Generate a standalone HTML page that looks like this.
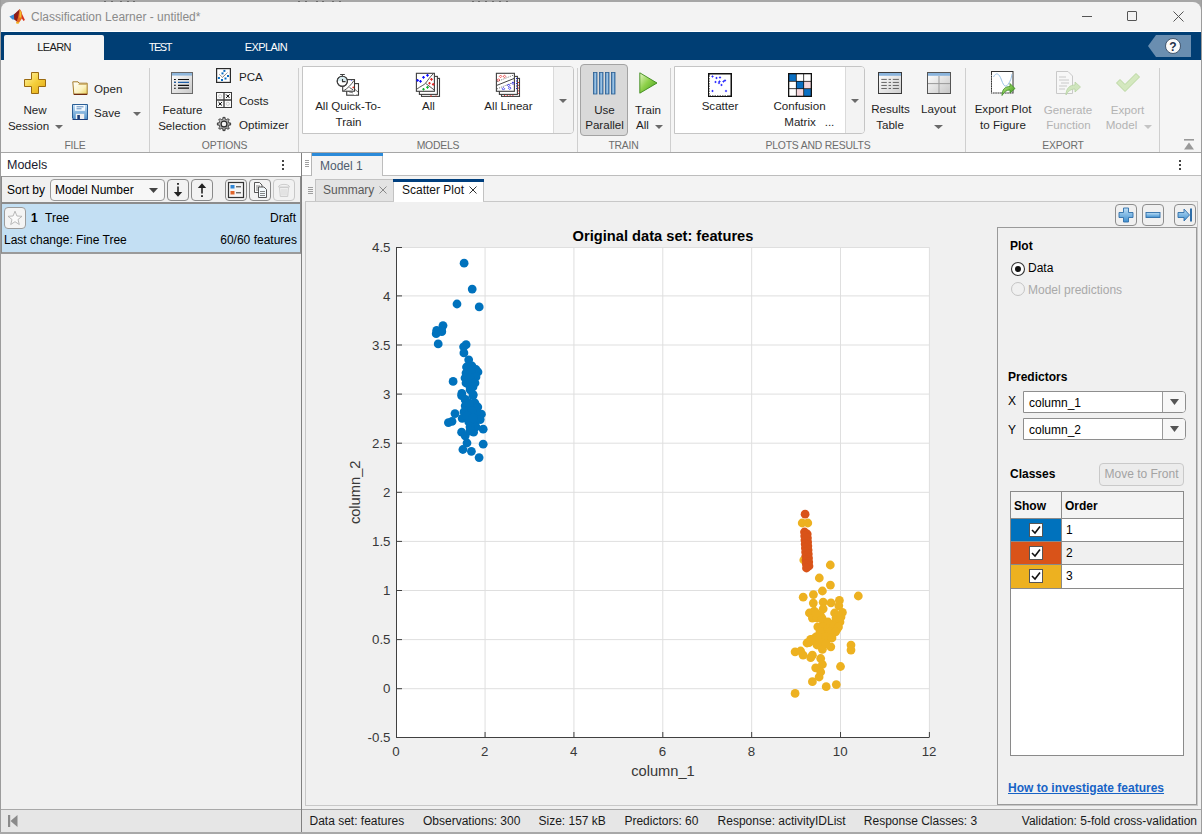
<!DOCTYPE html>
<html><head><meta charset="utf-8"><style>
html,body{margin:0;padding:0;width:1202px;height:834px;overflow:hidden;background:#f0f0f0;}
body{position:relative;font-family:"Liberation Sans",sans-serif;}
.t{position:absolute;white-space:nowrap;line-height:1;}
.r{position:absolute;box-sizing:border-box;}
svg.r{overflow:visible;}
</style></head><body>
<div class="r" style="left:0px;top:0px;width:1202px;height:834px;background:#f0f0f0;"></div>
<div class="r" style="left:0px;top:0px;width:1202px;height:12px;background:#a6a6a6;"></div>
<div class="r" style="left:1px;top:2px;width:1200px;height:30px;background:#f3f3f3;border-radius:8px 8px 0 0;"></div>
<div class="r" style="left:104px;top:1px;width:2px;height:1px;background:#6a6a6a;"></div>
<div class="r" style="left:111px;top:1px;width:2px;height:1px;background:#6a6a6a;"></div>
<div class="r" style="left:120px;top:1px;width:2px;height:1px;background:#6a6a6a;"></div>
<div class="r" style="left:127px;top:1px;width:2px;height:1px;background:#6a6a6a;"></div>
<div class="r" style="left:133px;top:1px;width:2px;height:1px;background:#6a6a6a;"></div>
<div class="r" style="left:298px;top:1px;width:2px;height:1px;background:#6a6a6a;"></div>
<div class="r" style="left:305px;top:1px;width:2px;height:1px;background:#6a6a6a;"></div>
<div class="r" style="left:316px;top:1px;width:2px;height:1px;background:#6a6a6a;"></div>
<div class="r" style="left:322px;top:1px;width:2px;height:1px;background:#6a6a6a;"></div>
<div class="r" style="left:332px;top:1px;width:2px;height:1px;background:#6a6a6a;"></div>
<div class="r" style="left:339px;top:1px;width:2px;height:1px;background:#6a6a6a;"></div>
<div class="r" style="left:472px;top:1px;width:2px;height:1px;background:#6a6a6a;"></div>
<div class="r" style="left:478px;top:1px;width:2px;height:1px;background:#6a6a6a;"></div>
<div class="r" style="left:485px;top:1px;width:2px;height:1px;background:#6a6a6a;"></div>
<div class="r" style="left:492px;top:1px;width:2px;height:1px;background:#6a6a6a;"></div>
<div class="r" style="left:499px;top:1px;width:2px;height:1px;background:#6a6a6a;"></div>
<div class="r" style="left:506px;top:1px;width:2px;height:1px;background:#6a6a6a;"></div>
<div class="r" style="left:1px;top:31px;width:1200px;height:1px;background:#ffffff;"></div>
<div class="r" style="left:0px;top:32px;width:1202px;height:28px;background:#003e74;"></div>
<div class="r" style="left:0px;top:60px;width:1202px;height:92px;background:#f5f5f5;"></div>
<div class="r" style="left:0px;top:152px;width:1202px;height:1px;background:#a6a6a6;"></div>
<div class="r" style="left:0px;top:0px;width:1px;height:834px;background:#9c9c9c;"></div>
<div class="t" style="left:31px;top:10.84px;font-size:12px;color:#8a8a8a;font-weight:normal;">Classification Learner - untitled*</div>
<svg class="r" style="left:6px;top:6px;" width="24" height="20" viewBox="0 0 24 20"><path d="M3.4 10.6 L8 8.2 L10.5 6.5 L12.5 11 L8.5 13.6 L6.5 13.4 Z" fill="#3a8cd6"/><path d="M8 8.6 L13.7 2.9 L14.2 10 L11.5 16 L8.2 13.6 Z" fill="#8e1d18"/><path d="M13.7 2.9 L18.9 14.1 L17.5 15 L15.6 12 Z" fill="#d9331d"/><path d="M13.7 2.9 L15.8 6 L16 12.5 L13 16.8 L10.3 16.8 L12 11.5 Z" fill="#e56a22"/><path d="M13.9 4 L15.3 6.5 L15.2 11.5 L13.4 11.5 Z" fill="#f2be2c"/><path d="M10.3 16.8 L13 16.8 L11 17.2 Z" fill="#f3b520" stroke="#f3b520" stroke-width="1"/></svg>
<div class="r" style="left:1082px;top:16px;width:10px;height:1px;background:#555;"></div>
<div class="r" style="left:1127px;top:11px;width:10px;height:10px;border:1px solid #555;border-radius:1px;"></div>
<svg class="r" style="left:1173px;top:11px;" width="11" height="11" viewBox="0 0 11 11"><path d="M0.5 0.5 L10.5 10.5 M10.5 0.5 L0.5 10.5" stroke="#555" stroke-width="1"/></svg>
<div class="r" style="left:4px;top:35px;width:100px;height:25px;background:#f5f5f5;border-radius:2px 2px 0 0;"></div>
<div class="t" style="left:4.00px;width:100px;text-align:center;top:42.19px;font-size:11px;color:#1a1a1a;font-weight:normal;letter-spacing:-0.6px;">LEARN</div>
<div class="t" style="left:109.80px;width:100px;text-align:center;top:42.19px;font-size:11px;color:#ffffff;font-weight:normal;letter-spacing:-1.5px;">TEST</div>
<div class="t" style="left:216.00px;width:100px;text-align:center;top:42.19px;font-size:11px;color:#ffffff;font-weight:normal;letter-spacing:-0.6px;">EXPLAIN</div>
<svg class="r" style="left:1148px;top:35px;" width="43" height="22" viewBox="0 0 43 22"><path d="M0 11 L8 0 L43 0 L43 22 L8 22 Z" fill="#6a8eb0"/><circle cx="25" cy="11" r="7.5" fill="#fafafa" stroke="#2b3d55" stroke-width="0.8"/><text x="25" y="15.5" text-anchor="middle" font-family="Liberation Sans" font-weight="bold" font-size="12" fill="#1d2f4a">?</text></svg>
<div class="r" style="left:149px;top:68px;width:1px;height:84px;background:#cfcfcf;"></div>
<div class="r" style="left:298px;top:68px;width:1px;height:84px;background:#cfcfcf;"></div>
<div class="r" style="left:577px;top:68px;width:1px;height:84px;background:#cfcfcf;"></div>
<div class="r" style="left:670px;top:68px;width:1px;height:84px;background:#cfcfcf;"></div>
<div class="r" style="left:965px;top:68px;width:1px;height:84px;background:#cfcfcf;"></div>
<div class="r" style="left:1159px;top:68px;width:1px;height:84px;background:#cfcfcf;"></div>
<div class="t" style="left:-25.00px;width:200px;text-align:center;top:140.80px;font-size:10.4px;color:#6d6d6d;font-weight:normal;letter-spacing:-0.2px;">FILE</div>
<div class="t" style="left:124.50px;width:200px;text-align:center;top:140.80px;font-size:10.4px;color:#6d6d6d;font-weight:normal;letter-spacing:-0.2px;">OPTIONS</div>
<div class="t" style="left:338.00px;width:200px;text-align:center;top:140.80px;font-size:10.4px;color:#6d6d6d;font-weight:normal;letter-spacing:-0.2px;">MODELS</div>
<div class="t" style="left:523.50px;width:200px;text-align:center;top:140.80px;font-size:10.4px;color:#6d6d6d;font-weight:normal;letter-spacing:-0.2px;">TRAIN</div>
<div class="t" style="left:718.00px;width:200px;text-align:center;top:140.80px;font-size:10.4px;color:#6d6d6d;font-weight:normal;letter-spacing:-0.2px;">PLOTS AND RESULTS</div>
<div class="t" style="left:963.00px;width:200px;text-align:center;top:140.80px;font-size:10.4px;color:#6d6d6d;font-weight:normal;letter-spacing:-0.2px;">EXPORT</div>
<div class="t" style="left:5.00px;width:60px;text-align:center;top:103.78px;font-size:11.6px;color:#1e1e1e;font-weight:normal;">New</div>
<div class="t" style="left:-1.50px;width:60px;text-align:center;top:119.68px;font-size:11.6px;color:#1e1e1e;font-weight:normal;">Session</div>
<svg class="r" style="left:55px;top:125px;" width="8" height="4" viewBox="0 0 8 4"><path d="M0 0 L8 0 L4.0 4 Z" fill="#6a6a6a"/></svg>
<svg class="r" style="left:24px;top:72px;" width="22" height="22" viewBox="0 0 22 22"><defs><linearGradient id="gp" x1="0" y1="0" x2="1" y2="1"><stop offset="0" stop-color="#fff7b0"/><stop offset="0.5" stop-color="#f5cf3a"/><stop offset="1" stop-color="#e0a514"/></linearGradient></defs><path d="M7.5 0.5 H14.5 V7.5 H21.5 V14.5 H14.5 V21.5 H7.5 V14.5 H0.5 V7.5 H7.5 Z" fill="url(#gp)" stroke="#9a6a10" stroke-width="1"/></svg>
<div class="t" style="left:94px;top:83.18px;font-size:11.6px;color:#1e1e1e;font-weight:normal;">Open</div>
<svg class="r" style="left:72px;top:81px;" width="17" height="15" viewBox="0 0 17 15"><defs><linearGradient id="gf" x1="0" y1="0" x2="1" y2="1"><stop offset="0" stop-color="#ffffff"/><stop offset="0.6" stop-color="#fbf2c0"/><stop offset="1" stop-color="#e9cf5a"/></linearGradient></defs><path d="M0.8 0.8 H6 L7 2.2 H15.2 V13.2 H1.8 Z" fill="url(#gf)" stroke="#a57c2a" stroke-width="1"/><path d="M6.5 3.5 H15" stroke="#c9a85a" stroke-width="0.8"/><path d="M1.8 13.4 H15.2" stroke="#6e2a10" stroke-width="1.2"/></svg>
<div class="t" style="left:94px;top:107.18px;font-size:11.6px;color:#1e1e1e;font-weight:normal;">Save</div>
<svg class="r" style="left:133px;top:112px;" width="8" height="4" viewBox="0 0 8 4"><path d="M0 0 L8 0 L4.0 4 Z" fill="#6a6a6a"/></svg>
<svg class="r" style="left:72px;top:104px;" width="16" height="16" viewBox="0 0 16 16"><defs><linearGradient id="gs" x1="0" y1="0" x2="0" y2="1"><stop offset="0" stop-color="#c4e0f6"/><stop offset="1" stop-color="#4f8fc8"/></linearGradient></defs><path d="M0.5 0.5 H15.5 V15.5 H2 L0.5 14 Z" fill="url(#gs)" stroke="#2b5e96"/><rect x="3" y="1" width="10" height="5.8" fill="#f5faff"/><path d="M4.5 2.8 H11.5 M4.5 4.8 H9.5" stroke="#4d7fb5" stroke-width="0.9"/><rect x="3.8" y="9.8" width="8.4" height="5.7" fill="#f0f0f0"/><rect x="5.3" y="11" width="2.6" height="4.5" fill="#1d3d78"/><path d="M0.5 15.5 H15.5" stroke="#1d3d78" stroke-width="1"/></svg>
<div class="t" style="left:152.50px;width:60px;text-align:center;top:104.18px;font-size:11.6px;color:#1e1e1e;font-weight:normal;">Feature</div>
<div class="t" style="left:152.00px;width:60px;text-align:center;top:119.68px;font-size:11.6px;color:#1e1e1e;font-weight:normal;">Selection</div>
<svg class="r" style="left:171px;top:72px;" width="22" height="22" viewBox="0 0 22 22"><defs><linearGradient id="gw" x1="0" y1="0" x2="1" y2="1"><stop offset="0" stop-color="#ffffff"/><stop offset="1" stop-color="#c8c8c8"/></linearGradient></defs><rect x="0.5" y="0.5" width="21" height="21" fill="url(#gw)" stroke="#6a6a6a"/><rect x="1" y="1" width="20" height="2.6" fill="#8fb7dc"/><path d="M3 7.5 H4.8 M3 10.4 H4.8 M3 13.3 H4.8 M3 16.2 H4.8" stroke="#111" stroke-width="1.1"/><path d="M7 7.5 H18 M7 13.3 H18 M7 16.2 H18" stroke="#111" stroke-width="1.2"/><path d="M7 10.4 H18 M3 10.4 H4.8" stroke="#1f5fa8" stroke-width="1.2"/></svg>
<div class="t" style="left:239px;top:71.18px;font-size:11.6px;color:#1e1e1e;font-weight:normal;">PCA</div>
<svg class="r" style="left:216px;top:68px;" width="15" height="15" viewBox="0 0 15 15"><rect x="0.6" y="0.6" width="13.8" height="13.8" fill="#fff" stroke="#2a2a2a" stroke-width="1.2"/><path d="M3.5 6.6 L6.5 9.3 L11.5 4.6" stroke="#333" stroke-width="0.9" stroke-dasharray="1 0.6" fill="none"/><rect x="7.4" y="1.9" width="2" height="2" fill="#0a6cc0"/><rect x="5.5" y="4.4" width="2" height="2" fill="#0a6cc0"/><rect x="11" y="7" width="2" height="2" fill="#0a6cc0"/><rect x="1.9" y="9" width="2" height="2" fill="#0a6cc0"/><rect x="5" y="11" width="2" height="2" fill="#0a6cc0"/><rect x="8.5" y="9.5" width="2" height="2" fill="#0a6cc0"/></svg>
<div class="t" style="left:239px;top:94.78px;font-size:11.6px;color:#1e1e1e;font-weight:normal;">Costs</div>
<svg class="r" style="left:216px;top:92px;" width="16" height="16" viewBox="0 0 16 16"><rect x="0.5" y="0.5" width="15" height="15" fill="#fafafa" stroke="#3a3a3a" stroke-width="1"/><path d="M8 0.5 V15.5 M0.5 8 H15.5" stroke="#3a3a3a" stroke-width="1.3"/><circle cx="4.2" cy="4.2" r="1.6" fill="none" stroke="#b5b5b5" stroke-width="0.6"/><circle cx="11.8" cy="11.8" r="1.6" fill="none" stroke="#b5b5b5" stroke-width="0.6"/><path d="M10 2.4 L13.6 6 M13.6 2.4 L10 6 M2.4 10 L6 13.6 M6 10 L2.4 13.6" stroke="#000" stroke-width="0.9"/><rect x="11" y="3.4" width="1.6" height="1.6" fill="#000"/><rect x="3.4" y="11" width="1.6" height="1.6" fill="#000"/></svg>
<div class="t" style="left:239px;top:118.78px;font-size:11.6px;color:#1e1e1e;font-weight:normal;">Optimizer</div>
<svg class="r" style="left:217px;top:117px;" width="14" height="14" viewBox="0 0 14 14"><defs><linearGradient id="gg" x1="0" y1="0" x2="1" y2="1"><stop offset="0" stop-color="#d0d0d0"/><stop offset="1" stop-color="#8a8a8a"/></linearGradient></defs><path d="M5.09 2.38 L5.99 2.10 L5.95 0.38 L8.05 0.38 L8.01 2.10 L8.91 2.38 L9.75 2.82 L10.94 1.58 L12.42 3.06 L11.18 4.25 L11.62 5.09 L11.90 5.99 L13.62 5.95 L13.62 8.05 L11.90 8.01 L11.62 8.91 L11.18 9.75 L12.42 10.94 L10.94 12.42 L9.75 11.18 L8.91 11.62 L8.01 11.90 L8.05 13.62 L5.95 13.62 L5.99 11.90 L5.09 11.62 L4.25 11.18 L3.06 12.42 L1.58 10.94 L2.82 9.75 L2.38 8.91 L2.10 8.01 L0.38 8.05 L0.38 5.95 L2.10 5.99 L2.38 5.09 L2.82 4.25 L1.58 3.06 L3.06 1.58 L4.25 2.82 Z" fill="url(#gg)" stroke="#3a3a3a" stroke-width="1" stroke-linejoin="round"/><circle cx="7" cy="7" r="2.9" fill="#f4f4f4" stroke="#2a2a2a" stroke-width="1.2"/></svg>
<div class="r" style="left:302px;top:66px;width:272px;height:68px;background:#fff;border:1px solid #c5c5c5;border-radius:0 4px 4px 0;"></div>
<div class="r" style="left:553px;top:67px;width:20px;height:66px;background:#f3f3f3;border-left:1px solid #dadada;border-radius:0 3px 3px 0;"></div>
<svg class="r" style="left:559px;top:99px;" width="8" height="4" viewBox="0 0 8 4"><path d="M0 0 L8 0 L4.0 4 Z" fill="#6a6a6a"/></svg>
<div class="t" style="left:303.00px;width:90px;text-align:center;top:100.18px;font-size:11.6px;color:#1e1e1e;font-weight:normal;">All Quick-To-</div>
<div class="t" style="left:318.50px;width:60px;text-align:center;top:115.68px;font-size:11.6px;color:#1e1e1e;font-weight:normal;">Train</div>
<div class="t" style="left:398.50px;width:60px;text-align:center;top:100.18px;font-size:11.6px;color:#1e1e1e;font-weight:normal;">All</div>
<div class="t" style="left:468.50px;width:80px;text-align:center;top:100.18px;font-size:11.6px;color:#1e1e1e;font-weight:normal;">All Linear</div>
<svg class="r" style="left:412px;top:70px;" width="30" height="30" viewBox="0 0 30 30"><rect x="9.5" y="8.4" width="18" height="18" fill="#fff" stroke="#3f3f3f" stroke-width="1.1"/><path d="M18 26 L20 26 M23.5 26 H24.5 M25.5 20.5 V21.5" stroke="#e03020" stroke-width="1.1"/><rect x="7.4" y="6.4" width="18" height="18" fill="#fff" stroke="#3f3f3f" stroke-width="1.1"/><rect x="4.4" y="3.3" width="18" height="18" fill="#fff" stroke="#3f3f3f" stroke-width="1.1"/><path d="M5 19 C9 16, 12 15, 13.5 13.3 C16 10, 18 7, 21 4 M13.5 13.3 L22 19.8" stroke="#444" stroke-width="0.9" fill="none"/><path d="M14.2 5.4 H16.8 M15.5 4.1000000000000005 V6.7" stroke="#1010ff" stroke-width="1.1"/><path d="M10.2 7.4 H12.8 M11.5 6.1000000000000005 V8.700000000000001" stroke="#1010ff" stroke-width="1.1"/><path d="M4.3 10.4 H6.8999999999999995 M5.6 9.1 V11.700000000000001" stroke="#1010ff" stroke-width="1.1"/><path d="M7.2 11.4 H9.8 M8.5 10.1 V12.700000000000001" stroke="#1010ff" stroke-width="1.1"/><path d="M18.2 9.4 H20.8 M19.5 8.1 V10.700000000000001" stroke="#e02a2a" stroke-width="1.1"/><path d="M16.2 13.3 H18.8 M17.5 12.0 V14.600000000000001" stroke="#e02a2a" stroke-width="1.1"/><path d="M19.9 14.4 H22.5 M21.2 13.1 V15.700000000000001" stroke="#e02a2a" stroke-width="1.1"/><path d="M10.2 19.2 H12.8 M11.5 17.9 V20.5" stroke="#10b030" stroke-width="1.1"/><path d="M14.2 17.4 H16.8 M15.5 16.099999999999998 V18.7" stroke="#10b030" stroke-width="1.1"/></svg>
<svg class="r" style="left:492px;top:70px;" width="30" height="30" viewBox="0 0 30 30"><rect x="9.5" y="8.4" width="18" height="18" fill="#fff" stroke="#3f3f3f" stroke-width="1.1"/><rect x="7.4" y="6.4" width="18" height="18" fill="#fff" stroke="#3f3f3f" stroke-width="1.1"/><path d="M24.5 8 V20" stroke="#2020e0" stroke-width="1" stroke-dasharray="1 1.5"/><path d="M26.5 12 V24 M12 25.5 H22" stroke="#e03030" stroke-width="1" stroke-dasharray="1 1.8"/><rect x="4.4" y="3.3" width="18" height="18" fill="#fff" stroke="#3f3f3f" stroke-width="1.1"/><path d="M5 15.3 L22 8.5" stroke="#444" stroke-width="1"/><path d="M5 11.6 L22 4.9 M5 18.9 L22 12.1" stroke="#444" stroke-width="0.8" stroke-dasharray="1 1.3"/><path d="M7.3 6.4 L8.6 5.1000000000000005 L9.9 6.4 L8.6 7.7 Z" fill="none" stroke="#e83030" stroke-width="0.8"/><path d="M11.2 6.4 L12.5 5.1000000000000005 L13.8 6.4 L12.5 7.7 Z" fill="none" stroke="#e83030" stroke-width="0.8"/><path d="M5.2 10 L6.5 8.7 L7.8 10 L6.5 11.3 Z" fill="none" stroke="#e83030" stroke-width="0.8"/><path d="M15.3 15.3 L16.6 14.0 L17.900000000000002 15.3 L16.6 16.6 Z" fill="none" stroke="#2020e8" stroke-width="0.8"/><path d="M19.7 13.2 L21 11.899999999999999 L22.3 13.2 L21 14.5 Z" fill="none" stroke="#2020e8" stroke-width="0.8"/><path d="M10.1 18.8 L11.4 17.5 L12.700000000000001 18.8 L11.4 20.1 Z" fill="none" stroke="#2020e8" stroke-width="0.8"/><path d="M16.4 18.2 L17.7 16.9 L19.0 18.2 L17.7 19.5 Z" fill="none" stroke="#2020e8" stroke-width="0.8"/></svg>
<svg class="r" style="left:334px;top:70px;" width="30" height="30" viewBox="0 0 30 30"><rect x="12.7" y="13.6" width="11.8" height="11.6" fill="#fff" stroke="#3a3a3a" stroke-width="1.1"/><path d="M13.5 20 C15 23, 18 22, 19 23 M21 19.5 L24 22" stroke="#444" stroke-width="0.8" fill="none"/><rect x="20" y="23.3" width="2" height="1.6" fill="#fff"/><rect x="8.7" y="9.6" width="11.8" height="11.6" fill="#fff" stroke="#3a3a3a" stroke-width="1.1"/><path d="M9.5 20.8 C13 19, 17 15, 20 10.5 M15.5 17.5 L19 19.8" stroke="#444" stroke-width="0.9" fill="none"/><circle cx="19.3" cy="17.4" r="0.9" fill="#e03020"/><circle cx="17.5" cy="10.5" r="0.6" fill="#6a6aff"/><circle cx="8.3" cy="11.3" r="5.1" fill="#ffffff" stroke="#3f3f3f" stroke-width="1.1"/><path d="M3.8 11 A4.5 4.5 0 0 1 12.8 11 Z" fill="#d6ebf0"/><circle cx="8.3" cy="11.3" r="5.1" fill="none" stroke="#3f3f3f" stroke-width="1.1"/><path d="M8.5 9 V11.6 H11.6" stroke="#3a3a3a" stroke-width="1.1" fill="none"/><path d="M6.1 4.5 H10.8 M8.4 4.5 V6.2" stroke="#3f3f3f" stroke-width="1"/></svg>
<div class="r" style="left:580px;top:64px;width:48px;height:72px;background:#d9d9d9;border:1px solid #a3a3a3;border-radius:4px;"></div>
<div class="t" style="left:574.50px;width:60px;text-align:center;top:103.68px;font-size:11.6px;color:#1e1e1e;font-weight:normal;">Use</div>
<div class="t" style="left:574.50px;width:60px;text-align:center;top:119.18px;font-size:11.6px;color:#1e1e1e;font-weight:normal;">Parallel</div>
<svg class="r" style="left:593px;top:72px;" width="23" height="23" viewBox="0 0 23 23"><defs><linearGradient id="gb" x1="0" y1="0" x2="1" y2="0"><stop offset="0" stop-color="#3d7ab8"/><stop offset="0.5" stop-color="#a9cde9"/><stop offset="1" stop-color="#3d7ab8"/></linearGradient></defs><rect x="0.5" y="0.5" width="3.5" height="21.5" fill="url(#gb)" stroke="#2c5f92" stroke-width="0.8"/><rect x="6.5" y="0.5" width="3.5" height="21.5" fill="url(#gb)" stroke="#2c5f92" stroke-width="0.8"/><rect x="12.5" y="0.5" width="3.5" height="21.5" fill="url(#gb)" stroke="#2c5f92" stroke-width="0.8"/><rect x="18.5" y="0.5" width="3.5" height="21.5" fill="url(#gb)" stroke="#2c5f92" stroke-width="0.8"/></svg>
<div class="t" style="left:618.00px;width:60px;text-align:center;top:103.68px;font-size:11.6px;color:#1e1e1e;font-weight:normal;">Train</div>
<div class="t" style="left:622.50px;width:40px;text-align:center;top:119.18px;font-size:11.6px;color:#1e1e1e;font-weight:normal;">All</div>
<svg class="r" style="left:655px;top:125px;" width="8" height="4" viewBox="0 0 8 4"><path d="M0 0 L8 0 L4.0 4 Z" fill="#6a6a6a"/></svg>
<svg class="r" style="left:639px;top:72px;" width="19" height="22" viewBox="0 0 19 22"><defs><linearGradient id="gt" x1="0" y1="0" x2="1" y2="1"><stop offset="0" stop-color="#e6f7c8"/><stop offset="0.45" stop-color="#8fd14a"/><stop offset="1" stop-color="#3f9a1a"/></linearGradient></defs><path d="M0.8 0.8 L18 11 L0.8 21.2 Z" fill="url(#gt)" stroke="#3d8a1c" stroke-width="0.9" stroke-linejoin="round"/></svg>
<div class="r" style="left:674px;top:66px;width:191px;height:68px;background:#fff;border:1px solid #c5c5c5;border-radius:0 4px 4px 0;"></div>
<div class="r" style="left:845px;top:67px;width:19px;height:66px;background:#f3f3f3;border-left:1px solid #dadada;border-radius:0 3px 3px 0;"></div>
<svg class="r" style="left:851px;top:99px;" width="8" height="4" viewBox="0 0 8 4"><path d="M0 0 L8 0 L4.0 4 Z" fill="#6a6a6a"/></svg>
<div class="t" style="left:690.00px;width:60px;text-align:center;top:100.18px;font-size:11.6px;color:#1e1e1e;font-weight:normal;">Scatter</div>
<svg class="r" style="left:708px;top:73px;" width="24" height="24" viewBox="0 0 24 24"><rect x="0.75" y="0.75" width="22.5" height="22.5" fill="#fff" stroke="#111" stroke-width="1.5"/><path d="M1.5 4 V22.5 H20" stroke="#fff" stroke-width="1" stroke-dasharray="1 1.5" fill="none"/><g stroke="#2a2aff" stroke-width="0.9"><path d="M3.4 3.5 h2.2 M4.5 2.4 v2.2"/><path d="M7.4 5 h2.2 M8.5 3.9 v2.2"/><path d="M10.9 4.5 h2.2 M12 3.4 v2.2"/><path d="M6.4 9 h2.2 M7.5 7.9 v2.2"/><path d="M10.4 8.5 h2.2 M11.5 7.4 v2.2"/><path d="M9.9 10 h2.2 M11 8.9 v2.2"/><path d="M14.4 8.5 h2.2 M15.5 7.4 v2.2"/><path d="M15.9 7.5 h2.2 M17 6.4 v2.2"/><path d="M12.4 12 h2.2 M13.5 10.9 v2.2"/><path d="M3.4 18 h2.2 M4.5 16.9 v2.2"/><path d="M16.9 18 h2.2 M18 16.9 v2.2"/></g></svg>
<div class="t" style="left:759.50px;width:80px;text-align:center;top:100.18px;font-size:11.6px;color:#1e1e1e;font-weight:normal;">Confusion</div>
<div class="t" style="left:770.00px;width:60px;text-align:center;top:115.88px;font-size:11.6px;color:#1e1e1e;font-weight:normal;">Matrix</div>
<div class="t" style="left:819.50px;width:20px;text-align:center;top:115.88px;font-size:11.6px;color:#1e1e1e;font-weight:normal;">...</div>
<svg class="r" style="left:788px;top:73px;" width="24" height="24" viewBox="0 0 24 24"><rect x="0" y="0" width="24" height="24" fill="#111"/><rect x="1.3" y="1.3" width="6.6" height="6.6" fill="#0a6fc2"/><rect x="8.7" y="1.3" width="6.6" height="6.6" fill="#fff"/><rect x="16.1" y="1.3" width="6.6" height="6.6" fill="#fff"/><rect x="1.3" y="8.7" width="6.6" height="6.6" fill="#fff"/><rect x="8.7" y="8.7" width="6.6" height="6.6" fill="#0a6fc2"/><rect x="16.1" y="8.7" width="6.6" height="6.6" fill="#f4d6dc"/><rect x="1.3" y="16.1" width="6.6" height="6.6" fill="#fff"/><rect x="8.7" y="16.1" width="6.6" height="6.6" fill="#f4d6dc"/><rect x="16.1" y="16.1" width="6.6" height="6.6" fill="#0a6fc2"/></svg>
<div class="t" style="left:860.50px;width:60px;text-align:center;top:103.38px;font-size:11.6px;color:#1e1e1e;font-weight:normal;">Results</div>
<div class="t" style="left:860.00px;width:60px;text-align:center;top:119.18px;font-size:11.6px;color:#1e1e1e;font-weight:normal;">Table</div>
<svg class="r" style="left:878px;top:72px;" width="24" height="22" viewBox="0 0 24 22"><defs><linearGradient id="gw2" x1="0" y1="0" x2="1" y2="1"><stop offset="0" stop-color="#ffffff"/><stop offset="1" stop-color="#cfcfcf"/></linearGradient></defs><rect x="0.5" y="0.5" width="23" height="21" fill="url(#gw2)" stroke="#3a3a3a"/><rect x="1" y="1" width="22" height="2.8" fill="#8ab4dc"/><path d="M3.3 7.40 H8.8 M10.6 7.40 H13 M14.8 7.40 H20.9" stroke="#666" stroke-width="1"/><path d="M3.3 10.43 H8.8 M10.6 10.43 H13 M14.8 10.43 H20.9" stroke="#666" stroke-width="1"/><path d="M3.3 13.46 H8.8 M10.6 13.46 H13 M14.8 13.46 H20.9" stroke="#666" stroke-width="1"/><path d="M3.3 16.49 H8.8 M10.6 16.49 H13 M14.8 16.49 H20.9" stroke="#666" stroke-width="1"/></svg>
<div class="t" style="left:908.50px;width:60px;text-align:center;top:103.38px;font-size:11.6px;color:#1e1e1e;font-weight:normal;">Layout</div>
<svg class="r" style="left:934px;top:125px;" width="9" height="4" viewBox="0 0 9 4"><path d="M0 0 L9 0 L4.5 4 Z" fill="#6a6a6a"/></svg>
<svg class="r" style="left:927px;top:72px;" width="24" height="22" viewBox="0 0 24 22"><defs><linearGradient id="gw3" x1="0" y1="0" x2="1" y2="1"><stop offset="0" stop-color="#ffffff"/><stop offset="1" stop-color="#c6c6c6"/></linearGradient></defs><rect x="0.5" y="0.5" width="23" height="21" fill="url(#gw3)" stroke="#555"/><rect x="1" y="1" width="22" height="2.8" fill="#8ab4dc"/><path d="M12 4 V21 M1 11.6 H23" stroke="#999" stroke-width="1"/></svg>
<div class="t" style="left:963.00px;width:80px;text-align:center;top:103.38px;font-size:11.6px;color:#1e1e1e;font-weight:normal;">Export Plot</div>
<div class="t" style="left:963.00px;width:80px;text-align:center;top:119.18px;font-size:11.6px;color:#1e1e1e;font-weight:normal;">to Figure</div>
<svg class="r" style="left:991px;top:71px;" width="25" height="25" viewBox="0 0 25 25"><defs><linearGradient id="ga" x1="0" y1="0" x2="1" y2="1"><stop offset="0" stop-color="#d8f0b0"/><stop offset="0.5" stop-color="#7cc24a"/><stop offset="1" stop-color="#2f8a1a"/></linearGradient></defs><rect x="0.5" y="0.5" width="21.5" height="21.5" fill="#fff" stroke="#333"/><path d="M1 22 H22" stroke="#fff" stroke-dasharray="1 1.4"/><path d="M1 4 V22" stroke="#fff" stroke-dasharray="1 1.4"/><path d="M2.5 6 C5 1, 8 2, 10.5 9 S 15 17, 18 12 S 20.5 4, 21 3" stroke="#9cc3e6" stroke-width="1" fill="none"/><path d="M11 24.5 C11 18.5, 14 15.5, 19 15.5 L19 12.5 L24 17.5 L19 22 L19 19 C15.5 19, 13 21, 11 24.5 Z" fill="url(#ga)" stroke="#3a8a22" stroke-width="0.8"/></svg>
<div class="t" style="left:1028.00px;width:80px;text-align:center;top:103.88px;font-size:11.6px;color:#b3b3b3;font-weight:normal;">Generate</div>
<div class="t" style="left:1028.50px;width:80px;text-align:center;top:119.18px;font-size:11.6px;color:#b3b3b3;font-weight:normal;">Function</div>
<svg class="r" style="left:1056px;top:71px;" width="25" height="25" viewBox="0 0 25 25"><path d="M0.5 0.5 H12 L16.5 5 V22.5 H0.5 Z" fill="#f7f7f7" stroke="#c9c9c9"/><path d="M3 6 H10 M3 9 H13 M5 12 H13 M3 15 H11 M3 18 H9" stroke="#c9c9c9"/><path d="M10 24 C10 17, 14 14, 19 14 L19 11 L24.5 16 L19 21 L19 18 C15 18, 12 20, 10 24 Z" fill="#cfe5bd" stroke="#b7d3a3" stroke-width="0.8"/></svg>
<div class="t" style="left:1087.50px;width:80px;text-align:center;top:103.88px;font-size:11.6px;color:#b3b3b3;font-weight:normal;">Export</div>
<div class="t" style="left:1081.50px;width:80px;text-align:center;top:119.18px;font-size:11.6px;color:#b3b3b3;font-weight:normal;">Model</div>
<svg class="r" style="left:1144px;top:125px;" width="8" height="4" viewBox="0 0 8 4"><path d="M0 0 L8 0 L4.0 4 Z" fill="#c4c4c4"/></svg>
<svg class="r" style="left:1116px;top:73px;" width="24" height="20" viewBox="0 0 24 20"><path d="M0.5 10 L4 6.5 L9 11.5 L20 0.5 L23.5 4 L9 18.5 Z" fill="#d4e8bf" stroke="#b9d7a0" stroke-width="1" stroke-linejoin="round"/></svg>
<svg class="r" style="left:1184px;top:139px;" width="11" height="11" viewBox="0 0 11 11"><rect x="0" y="0" width="10" height="1.6" fill="#999"/><path d="M0 10.5 L5 3.5 L10 10.5 Z" fill="#999"/></svg>
<div class="r" style="left:1px;top:153px;width:300px;height:23px;background:#fff;"></div>
<div class="t" style="left:7px;top:159.02px;font-size:12.5px;color:#1a1a2e;font-weight:normal;">Models</div>
<div class="r" style="left:282px;top:160px;width:2px;height:2px;background:#444;"></div>
<div class="r" style="left:282px;top:164px;width:2px;height:2px;background:#444;"></div>
<div class="r" style="left:282px;top:168px;width:2px;height:2px;background:#444;"></div>
<div class="r" style="left:1px;top:176px;width:300px;height:1px;background:#999;"></div>
<div class="r" style="left:1px;top:177px;width:300px;height:26px;background:#f0f0f0;"></div>
<div class="r" style="left:1px;top:202px;width:300px;height:2px;background:#8c8c8c;"></div>
<div class="t" style="left:7px;top:184.24px;font-size:12px;color:#000;font-weight:normal;">Sort by</div>
<div class="r" style="left:50px;top:179px;width:115px;height:22px;background:#f7f7f7;border:1px solid #9a9a9a;border-radius:4px;"></div>
<div class="t" style="left:55px;top:184.24px;font-size:12px;color:#000;font-weight:normal;">Model Number</div>
<svg class="r" style="left:149px;top:188px;" width="9" height="5" viewBox="0 0 9 5"><path d="M0 0 L9 0 L4.5 5 Z" fill="#444"/></svg>
<div class="r" style="left:167px;top:179px;width:22px;height:22px;background:#f2f2f2;border:1px solid #8a8a8a;border-radius:4px;"></div>
<div class="r" style="left:191px;top:179px;width:22px;height:22px;background:#f2f2f2;border:1px solid #8a8a8a;border-radius:4px;"></div>
<div class="r" style="left:225px;top:179px;width:22px;height:22px;background:#f2f2f2;border:1px solid #8a8a8a;border-radius:4px;"></div>
<div class="r" style="left:249px;top:179px;width:22px;height:22px;background:#f2f2f2;border:1px solid #8a8a8a;border-radius:4px;"></div>
<div class="r" style="left:273px;top:179px;width:22px;height:22px;background:#f2f2f2;border:1px solid #c8c8c8;border-radius:4px;"></div>
<svg class="r" style="left:170px;top:182px;" width="16" height="16" viewBox="0 0 16 16"><path d="M8 4.5 V11" stroke="#222" stroke-width="1.6"/><path d="M3.8 10 L12.2 10 L8 14.8 Z" fill="#222"/><rect x="7.1" y="1" width="1.8" height="1.8" fill="#222"/></svg>
<svg class="r" style="left:194px;top:182px;" width="16" height="16" viewBox="0 0 16 16"><path d="M8 5 V11.5" stroke="#222" stroke-width="1.6"/><path d="M3.8 6 L12.2 6 L8 1.2 Z" fill="#222"/><rect x="7.1" y="13.2" width="1.8" height="1.8" fill="#222"/></svg>
<svg class="r" style="left:228px;top:182px;" width="16" height="16" viewBox="0 0 16 16"><rect x="0.5" y="0.5" width="15" height="15" fill="#f5f5f5" stroke="#333" stroke-width="1.2"/><rect x="2.5" y="3" width="4" height="3.5" fill="#2f86d6"/><rect x="2.5" y="9" width="4" height="3.5" fill="#e0642a"/><path d="M8 4.8 H13 M8 10.8 H13" stroke="#333" stroke-width="1"/></svg>
<svg class="r" style="left:253px;top:182px;" width="16" height="16" viewBox="0 0 16 16"><path d="M1.5 0.5 H6.5 L9 3 V10.5 H1.5 Z" fill="#fafafa" stroke="#444" stroke-width="0.9"/><path d="M3 4 H7 M3 6 H7 M3 8 H7" stroke="#555" stroke-width="0.7"/><path d="M5.5 5 H11 L13.5 7.5 V15.5 H5.5 Z" fill="#f4fafd" stroke="#444" stroke-width="0.9"/><path d="M7 9.5 H12 M7 11.5 H12 M7 13.5 H12" stroke="#555" stroke-width="0.7"/></svg>
<svg class="r" style="left:276px;top:182px;" width="16" height="16" viewBox="0 0 16 16"><path d="M2.5 5 C2.5 1.5, 13.5 1.5, 13.5 5 Z" fill="#f2f2f2" stroke="#c9c9c9" stroke-width="0.9"/><path d="M3.5 5.5 L4.3 14.5 H11.7 L12.5 5.5 Z" fill="#efefef" stroke="#c9c9c9" stroke-width="0.9"/><path d="M6 7 V13.5 M8 7 V13.5 M10 7 V13.5" stroke="#d2d2d2" stroke-width="0.8"/></svg>
<div class="r" style="left:1px;top:204px;width:300px;height:49px;background:#c3dff3;"></div>
<div class="r" style="left:1px;top:252px;width:300px;height:2px;background:#9a9a9a;"></div>
<div class="r" style="left:1px;top:176px;width:1px;height:77px;background:#8c8c8c;"></div>
<div class="r" style="left:4px;top:207px;width:22px;height:22px;background:#f4f4f4;border:1px solid #9c9c9c;border-radius:4px;"></div>
<svg class="r" style="left:7px;top:210px;" width="16" height="16" viewBox="0 0 16 16"><path d="M8 1.2 L9.9 6 L15 6.3 L11 9.5 L12.3 14.5 L8 11.7 L3.7 14.5 L5 9.5 L1 6.3 L6.1 6 Z" fill="#fafafa" stroke="#a8a8a8" stroke-width="0.8"/></svg>
<div class="t" style="left:31px;top:212.24px;font-size:12px;color:#000;font-weight:bold;">1</div>
<div class="t" style="left:45px;top:212.24px;font-size:12px;color:#000;font-weight:normal;">Tree</div>
<div class="t" style="left:196.00px;width:100px;text-align:right;top:212.24px;font-size:12px;color:#000;font-weight:normal;">Draft</div>
<div class="t" style="left:4px;top:234.34px;font-size:12px;color:#000;font-weight:normal;">Last change: Fine Tree</div>
<div class="t" style="left:147.00px;width:150px;text-align:right;top:234.34px;font-size:12px;color:#000;font-weight:normal;">60/60 features</div>
<div class="r" style="left:0px;top:153px;width:1px;height:655px;background:#9c9c9c;"></div>
<div class="r" style="left:301px;top:153px;width:1px;height:656px;background:#808080;"></div>
<div class="r" style="left:300px;top:176px;width:1px;height:77px;background:#8c8c8c;"></div>
<div class="r" style="left:302px;top:153px;width:899px;height:23px;background:#fff;"></div>
<div class="r" style="left:302px;top:175px;width:899px;height:1px;background:#bdbdbd;"></div>
<svg class="r" style="left:305px;top:160px;" width="4" height="8" viewBox="0 0 4 8"><path d="M0 0.5 H4 M0 2.5 H4 M0 4.5 H4 M0 6.5 H4" stroke="#888" stroke-width="0.8"/></svg>
<div class="r" style="left:311px;top:153px;width:72px;height:23px;background:#f3f3f3;border-right:1px solid #bdbdbd;border-left:1px solid #b5b5b5;"></div>
<div class="r" style="left:312px;top:153px;width:71px;height:3px;background:#2a8ad9;"></div>
<div class="t" style="left:320px;top:160.24px;font-size:12px;color:#4f5d6e;font-weight:normal;">Model 1</div>
<div class="r" style="left:1179px;top:160px;width:2px;height:2px;background:#444;"></div>
<div class="r" style="left:1179px;top:164px;width:2px;height:2px;background:#444;"></div>
<div class="r" style="left:1179px;top:168px;width:2px;height:2px;background:#444;"></div>
<div class="r" style="left:302px;top:176px;width:899px;height:26px;background:#f3f3f3;"></div>
<svg class="r" style="left:308px;top:187px;" width="5" height="8" viewBox="0 0 5 8"><path d="M0 0.5 H5 M0 2.5 H5 M0 4.5 H5 M0 6.5 H5" stroke="#888" stroke-width="0.8"/></svg>
<div class="r" style="left:315px;top:179px;width:79px;height:23px;background:#e3e3e3;border:1px solid #c2c2c2;border-bottom:none;"></div>
<div class="t" style="left:323px;top:184.34px;font-size:12px;color:#5a5a5a;font-weight:normal;">Summary</div>
<svg class="r" style="left:379px;top:186px;" width="8" height="8" viewBox="0 0 8 8"><path d="M0.5 0.5 L7.5 7.5 M7.5 0.5 L0.5 7.5" stroke="#8a8a8a" stroke-width="1"/></svg>
<div class="r" style="left:393px;top:179px;width:91px;height:23px;background:#fff;border:1px solid #c2c2c2;border-bottom:none;"></div>
<div class="r" style="left:393px;top:179px;width:91px;height:3px;background:#003f7e;"></div>
<div class="t" style="left:402px;top:184.34px;font-size:12px;color:#111;font-weight:normal;">Scatter Plot</div>
<svg class="r" style="left:469px;top:186px;" width="8" height="8" viewBox="0 0 8 8"><path d="M0.5 0.5 L7.5 7.5 M7.5 0.5 L0.5 7.5" stroke="#333" stroke-width="1"/></svg>
<div class="r" style="left:305px;top:201px;width:893px;height:605px;background:#f0f0f0;border:1px solid #c8c8c8;"></div>
<div class="r" style="left:394px;top:201px;width:89px;height:1px;background:#fff;"></div>
<div class="r" style="left:1px;top:809px;width:1200px;height:1px;background:#a8a8a8;"></div>
<div class="r" style="left:1px;top:810px;width:1200px;height:22px;background:#e6e6e6;"></div>
<div class="r" style="left:301px;top:809px;width:1px;height:23px;background:#808080;"></div>
<svg class="r" style="left:8px;top:814px;" width="10" height="14" viewBox="0 0 10 14"><rect x="0" y="1" width="2.2" height="12" fill="#8a8a8a"/><path d="M9.5 1 V13 L2.5 7 Z" fill="#8a8a8a"/></svg>
<div class="t" style="left:309.5px;top:814.84px;font-size:12px;color:#1a1a1a;font-weight:normal;">Data set: features</div>
<div class="t" style="left:423px;top:814.84px;font-size:12px;color:#1a1a1a;font-weight:normal;">Observations: 300</div>
<div class="t" style="left:538.5px;top:814.84px;font-size:12px;color:#1a1a1a;font-weight:normal;">Size: 157 kB</div>
<div class="t" style="left:624.4px;top:814.84px;font-size:12px;color:#1a1a1a;font-weight:normal;">Predictors: 60</div>
<div class="t" style="left:717.6px;top:814.84px;font-size:12px;color:#1a1a1a;font-weight:normal;">Response: activityIDList</div>
<div class="t" style="left:863.8px;top:814.84px;font-size:12px;color:#1a1a1a;font-weight:normal;">Response Classes: 3</div>
<div class="t" style="left:947.00px;width:250px;text-align:right;top:814.84px;font-size:12px;color:#1a1a1a;font-weight:normal;">Validation: 5-fold cross-validation</div>
<div class="r" style="left:0px;top:832px;width:1202px;height:2px;background:#a8a8a8;"></div>
<div class="r" style="left:1201px;top:0px;width:1px;height:834px;background:#9c9c9c;"></div>
<svg class="r" style="left:0px;top:0px;pointer-events:none;" width="1202" height="834" viewBox="0 0 1202 834"><rect x="397" y="247" width="532" height="490" fill="#fff"/><g stroke="#dfdfdf" stroke-width="1" fill="none"><path d="M485.07 247 V737"/><path d="M573.93 247 V737"/><path d="M662.80 247 V737"/><path d="M751.67 247 V737"/><path d="M840.53 247 V737"/><path d="M929.40 247 V737"/><path d="M397 247.50 H929"/><path d="M397 295.90 H929"/><path d="M397 345.00 H929"/><path d="M397 394.10 H929"/><path d="M397 443.20 H929"/><path d="M397 492.30 H929"/><path d="M397 541.40 H929"/><path d="M397 590.50 H929"/><path d="M397 639.60 H929"/><path d="M397 688.70 H929"/></g><circle cx="802.2" cy="523" r="4.4" fill="#EDB120"/><circle cx="807.8" cy="523" r="4.4" fill="#EDB120"/><circle cx="803.8" cy="560" r="4.4" fill="#EDB120"/><circle cx="830.3" cy="565" r="4.4" fill="#EDB120"/><circle cx="819.3" cy="578" r="4.4" fill="#EDB120"/><circle cx="830.4" cy="585.1" r="4.4" fill="#EDB120"/><circle cx="822.4" cy="591" r="4.4" fill="#EDB120"/><circle cx="813.4" cy="594.6" r="4.4" fill="#EDB120"/><circle cx="803.2" cy="597.2" r="4.4" fill="#EDB120"/><circle cx="858.3" cy="596" r="4.4" fill="#EDB120"/><circle cx="813.3" cy="603.1" r="4.4" fill="#EDB120"/><circle cx="823.2" cy="602.2" r="4.4" fill="#EDB120"/><circle cx="831" cy="602.8" r="4.4" fill="#EDB120"/><circle cx="839.4" cy="600.4" r="4.4" fill="#EDB120"/><circle cx="838.8" cy="605.8" r="4.4" fill="#EDB120"/><circle cx="809.4" cy="613" r="4.4" fill="#EDB120"/><circle cx="812.4" cy="618.1" r="4.4" fill="#EDB120"/><circle cx="814.2" cy="611.2" r="4.4" fill="#EDB120"/><circle cx="823.2" cy="608.8" r="4.4" fill="#EDB120"/><circle cx="820.2" cy="614.8" r="4.4" fill="#EDB120"/><circle cx="834.6" cy="613" r="4.4" fill="#EDB120"/><circle cx="842.4" cy="612.4" r="4.4" fill="#EDB120"/><circle cx="840" cy="622" r="4.4" fill="#EDB120"/><circle cx="823.2" cy="620.8" r="4.4" fill="#EDB120"/><circle cx="817.8" cy="626.8" r="4.4" fill="#EDB120"/><circle cx="828" cy="625" r="4.4" fill="#EDB120"/><circle cx="834" cy="623.8" r="4.4" fill="#EDB120"/><circle cx="837" cy="629.2" r="4.4" fill="#EDB120"/><circle cx="832.2" cy="634" r="4.4" fill="#EDB120"/><circle cx="825" cy="632.2" r="4.4" fill="#EDB120"/><circle cx="820.2" cy="635.8" r="4.4" fill="#EDB120"/><circle cx="810.6" cy="639.4" r="4.4" fill="#EDB120"/><circle cx="814.8" cy="638.2" r="4.4" fill="#EDB120"/><circle cx="826.2" cy="640.6" r="4.4" fill="#EDB120"/><circle cx="807" cy="643" r="4.4" fill="#EDB120"/><circle cx="809" cy="642.6" r="4.4" fill="#EDB120"/><circle cx="813.2" cy="639.2" r="4.4" fill="#EDB120"/><circle cx="816.5" cy="636.7" r="4.4" fill="#EDB120"/><circle cx="821.6" cy="641.8" r="4.4" fill="#EDB120"/><circle cx="822.4" cy="649.3" r="4.4" fill="#EDB120"/><circle cx="823.3" cy="633.4" r="4.4" fill="#EDB120"/><circle cx="831.7" cy="635" r="4.4" fill="#EDB120"/><circle cx="835" cy="630.8" r="4.4" fill="#EDB120"/><circle cx="830.8" cy="646.8" r="4.4" fill="#EDB120"/><circle cx="851" cy="645.1" r="4.4" fill="#EDB120"/><circle cx="851" cy="650.1" r="4.4" fill="#EDB120"/><circle cx="795.1" cy="651.8" r="4.4" fill="#EDB120"/><circle cx="800.6" cy="651" r="4.4" fill="#EDB120"/><circle cx="803.1" cy="655.2" r="4.4" fill="#EDB120"/><circle cx="810.7" cy="657.7" r="4.4" fill="#EDB120"/><circle cx="812.4" cy="655.2" r="4.4" fill="#EDB120"/><circle cx="820.7" cy="658.5" r="4.4" fill="#EDB120"/><circle cx="822.4" cy="664.5" r="4.4" fill="#EDB120"/><circle cx="815.7" cy="667.8" r="4.4" fill="#EDB120"/><circle cx="820.7" cy="672" r="4.4" fill="#EDB120"/><circle cx="819.1" cy="677" r="4.4" fill="#EDB120"/><circle cx="812.4" cy="681.7" r="4.4" fill="#EDB120"/><circle cx="840.5" cy="666.5" r="4.4" fill="#EDB120"/><circle cx="826.2" cy="686.7" r="4.4" fill="#EDB120"/><circle cx="836.3" cy="684.6" r="4.4" fill="#EDB120"/><circle cx="795.1" cy="693.4" r="4.4" fill="#EDB120"/><circle cx="817" cy="618" r="4.4" fill="#EDB120"/><circle cx="822" cy="618" r="4.4" fill="#EDB120"/><circle cx="828" cy="622" r="4.4" fill="#EDB120"/><circle cx="836" cy="618" r="4.4" fill="#EDB120"/><circle cx="841" cy="617" r="4.4" fill="#EDB120"/><circle cx="823" cy="627" r="4.4" fill="#EDB120"/><circle cx="828" cy="629" r="4.4" fill="#EDB120"/><circle cx="834" cy="626" r="4.4" fill="#EDB120"/><circle cx="838.5" cy="627" r="4.4" fill="#EDB120"/><circle cx="820" cy="632" r="4.4" fill="#EDB120"/><circle cx="830" cy="632" r="4.4" fill="#EDB120"/><circle cx="835.5" cy="632" r="4.4" fill="#EDB120"/><circle cx="820" cy="638" r="4.4" fill="#EDB120"/><circle cx="826" cy="637" r="4.4" fill="#EDB120"/><circle cx="832" cy="638" r="4.4" fill="#EDB120"/><circle cx="814" cy="641" r="4.4" fill="#EDB120"/><circle cx="817" cy="645" r="4.4" fill="#EDB120"/><circle cx="826" cy="644" r="4.4" fill="#EDB120"/><circle cx="816" cy="613" r="4.4" fill="#EDB120"/><circle cx="805.1" cy="514.2" r="4.4" fill="#D95319"/><circle cx="804.5" cy="532" r="4.4" fill="#D95319"/><circle cx="807.21" cy="534" r="4.4" fill="#D95319"/><circle cx="804.72" cy="536" r="4.4" fill="#D95319"/><circle cx="807.4300000000001" cy="538" r="4.4" fill="#D95319"/><circle cx="804.94" cy="540" r="4.4" fill="#D95319"/><circle cx="807.65" cy="542" r="4.4" fill="#D95319"/><circle cx="805.16" cy="544" r="4.4" fill="#D95319"/><circle cx="807.87" cy="546" r="4.4" fill="#D95319"/><circle cx="805.38" cy="548" r="4.4" fill="#D95319"/><circle cx="808.09" cy="550" r="4.4" fill="#D95319"/><circle cx="805.6" cy="552" r="4.4" fill="#D95319"/><circle cx="808.3100000000001" cy="554" r="4.4" fill="#D95319"/><circle cx="805.82" cy="556" r="4.4" fill="#D95319"/><circle cx="808.53" cy="558" r="4.4" fill="#D95319"/><circle cx="806.04" cy="560" r="4.4" fill="#D95319"/><circle cx="808.75" cy="562" r="4.4" fill="#D95319"/><circle cx="806.26" cy="564" r="4.4" fill="#D95319"/><circle cx="808.97" cy="566" r="4.4" fill="#D95319"/><circle cx="806.48" cy="568" r="4.4" fill="#D95319"/><circle cx="464.1" cy="263.2" r="4.4" fill="#0072BD"/><circle cx="472.2" cy="289.1" r="4.4" fill="#0072BD"/><circle cx="457.0" cy="304.0" r="4.4" fill="#0072BD"/><circle cx="479.2" cy="306.9" r="4.4" fill="#0072BD"/><circle cx="443" cy="325.6" r="4.4" fill="#0072BD"/><circle cx="441.6" cy="330.4" r="4.4" fill="#0072BD"/><circle cx="436.7" cy="330.4" r="4.4" fill="#0072BD"/><circle cx="436.2" cy="333.7" r="4.4" fill="#0072BD"/><circle cx="441.8" cy="331.7" r="4.4" fill="#0072BD"/><circle cx="438.2" cy="343.9" r="4.4" fill="#0072BD"/><circle cx="466.1" cy="344.7" r="4.4" fill="#0072BD"/><circle cx="463.6" cy="346.8" r="4.4" fill="#0072BD"/><circle cx="463.9" cy="352.9" r="4.4" fill="#0072BD"/><circle cx="468.7" cy="359.8" r="4.4" fill="#0072BD"/><circle cx="466.5" cy="367" r="4.4" fill="#0072BD"/><circle cx="472" cy="366" r="4.4" fill="#0072BD"/><circle cx="476" cy="369.5" r="4.4" fill="#0072BD"/><circle cx="478" cy="372" r="4.4" fill="#0072BD"/><circle cx="466" cy="373" r="4.4" fill="#0072BD"/><circle cx="471" cy="372" r="4.4" fill="#0072BD"/><circle cx="476" cy="377" r="4.4" fill="#0072BD"/><circle cx="465" cy="378" r="4.4" fill="#0072BD"/><circle cx="470" cy="378" r="4.4" fill="#0072BD"/><circle cx="466" cy="383" r="4.4" fill="#0072BD"/><circle cx="471" cy="383" r="4.4" fill="#0072BD"/><circle cx="475" cy="383" r="4.4" fill="#0072BD"/><circle cx="470" cy="387" r="4.4" fill="#0072BD"/><circle cx="473" cy="387" r="4.4" fill="#0072BD"/><circle cx="453.1" cy="381.4" r="4.4" fill="#0072BD"/><circle cx="461.8" cy="393.4" r="4.4" fill="#0072BD"/><circle cx="470.2" cy="389.8" r="4.4" fill="#0072BD"/><circle cx="473.2" cy="394.6" r="4.4" fill="#0072BD"/><circle cx="465.4" cy="399.4" r="4.4" fill="#0072BD"/><circle cx="461.6" cy="395.6" r="4.4" fill="#0072BD"/><circle cx="473" cy="395.6" r="4.4" fill="#0072BD"/><circle cx="465.2" cy="399.8" r="4.4" fill="#0072BD"/><circle cx="474.8" cy="402.8" r="4.4" fill="#0072BD"/><circle cx="477.8" cy="407" r="4.4" fill="#0072BD"/><circle cx="465.2" cy="405.8" r="4.4" fill="#0072BD"/><circle cx="470" cy="408.2" r="4.4" fill="#0072BD"/><circle cx="455" cy="413.6" r="4.4" fill="#0072BD"/><circle cx="464" cy="411.8" r="4.4" fill="#0072BD"/><circle cx="481.4" cy="414.2" r="4.4" fill="#0072BD"/><circle cx="462.2" cy="418.4" r="4.4" fill="#0072BD"/><circle cx="471.2" cy="414.8" r="4.4" fill="#0072BD"/><circle cx="476" cy="413" r="4.4" fill="#0072BD"/><circle cx="468.8" cy="422" r="4.4" fill="#0072BD"/><circle cx="474.8" cy="422.6" r="4.4" fill="#0072BD"/><circle cx="480.2" cy="419.6" r="4.4" fill="#0072BD"/><circle cx="448.4" cy="422.6" r="4.4" fill="#0072BD"/><circle cx="452" cy="421.4" r="4.4" fill="#0072BD"/><circle cx="461.6" cy="432.2" r="4.4" fill="#0072BD"/><circle cx="465.2" cy="435.8" r="4.4" fill="#0072BD"/><circle cx="473.6" cy="432.2" r="4.4" fill="#0072BD"/><circle cx="476" cy="426.8" r="4.4" fill="#0072BD"/><circle cx="483.2" cy="429.2" r="4.4" fill="#0072BD"/><circle cx="470" cy="427" r="4.4" fill="#0072BD"/><circle cx="467" cy="443" r="4.4" fill="#0072BD"/><circle cx="483.2" cy="444.2" r="4.4" fill="#0072BD"/><circle cx="462.9" cy="449.5" r="4.4" fill="#0072BD"/><circle cx="471.4" cy="451.3" r="4.4" fill="#0072BD"/><circle cx="479.1" cy="457.6" r="4.4" fill="#0072BD"/><circle cx="469" cy="403" r="4.4" fill="#0072BD"/><circle cx="472" cy="411" r="4.4" fill="#0072BD"/><circle cx="467" cy="416" r="4.4" fill="#0072BD"/><circle cx="473" cy="418" r="4.4" fill="#0072BD"/><circle cx="470" cy="431" r="4.4" fill="#0072BD"/><g stroke="#404040" stroke-width="1" fill="none"><path d="M396.5 247 V737.5 H929.5" /><path d="M485.07 737 V732"/><path d="M573.93 737 V732"/><path d="M662.80 737 V732"/><path d="M751.67 737 V732"/><path d="M840.53 737 V732"/><path d="M929.40 737 V732"/><path d="M396 247.50 H402"/><path d="M396 295.90 H402"/><path d="M396 345.00 H402"/><path d="M396 394.10 H402"/><path d="M396 443.20 H402"/><path d="M396 492.30 H402"/><path d="M396 541.40 H402"/><path d="M396 590.50 H402"/><path d="M396 639.60 H402"/><path d="M396 688.70 H402"/><path d="M396 737.50 H402"/></g></svg>
<div class="t" style="left:375.90px;width:40px;text-align:center;top:744.74px;font-size:13.3px;color:#383838;font-weight:normal;">0</div>
<div class="t" style="left:464.77px;width:40px;text-align:center;top:744.74px;font-size:13.3px;color:#383838;font-weight:normal;">2</div>
<div class="t" style="left:553.63px;width:40px;text-align:center;top:744.74px;font-size:13.3px;color:#383838;font-weight:normal;">4</div>
<div class="t" style="left:642.50px;width:40px;text-align:center;top:744.74px;font-size:13.3px;color:#383838;font-weight:normal;">6</div>
<div class="t" style="left:731.37px;width:40px;text-align:center;top:744.74px;font-size:13.3px;color:#383838;font-weight:normal;">8</div>
<div class="t" style="left:820.23px;width:40px;text-align:center;top:744.74px;font-size:13.3px;color:#383838;font-weight:normal;">10</div>
<div class="t" style="left:909.10px;width:40px;text-align:center;top:744.74px;font-size:13.3px;color:#383838;font-weight:normal;">12</div>
<div class="t" style="left:330.50px;width:60px;text-align:right;top:240.54px;font-size:13.3px;color:#383838;font-weight:normal;">4.5</div>
<div class="t" style="left:330.50px;width:60px;text-align:right;top:289.54px;font-size:13.3px;color:#383838;font-weight:normal;">4</div>
<div class="t" style="left:330.50px;width:60px;text-align:right;top:338.54px;font-size:13.3px;color:#383838;font-weight:normal;">3.5</div>
<div class="t" style="left:330.50px;width:60px;text-align:right;top:387.54px;font-size:13.3px;color:#383838;font-weight:normal;">3</div>
<div class="t" style="left:330.50px;width:60px;text-align:right;top:436.54px;font-size:13.3px;color:#383838;font-weight:normal;">2.5</div>
<div class="t" style="left:330.50px;width:60px;text-align:right;top:485.54px;font-size:13.3px;color:#383838;font-weight:normal;">2</div>
<div class="t" style="left:330.50px;width:60px;text-align:right;top:534.54px;font-size:13.3px;color:#383838;font-weight:normal;">1.5</div>
<div class="t" style="left:330.50px;width:60px;text-align:right;top:583.54px;font-size:13.3px;color:#383838;font-weight:normal;">1</div>
<div class="t" style="left:330.50px;width:60px;text-align:right;top:632.54px;font-size:13.3px;color:#383838;font-weight:normal;">0.5</div>
<div class="t" style="left:330.50px;width:60px;text-align:right;top:681.54px;font-size:13.3px;color:#383838;font-weight:normal;">0</div>
<div class="t" style="left:330.50px;width:60px;text-align:right;top:730.54px;font-size:13.3px;color:#383838;font-weight:normal;">-0.5</div>
<div class="t" style="left:513.00px;width:300px;text-align:center;top:228.58px;font-size:14.67px;color:#000;font-weight:bold;">Original data set: features</div>
<div class="t" style="left:563.00px;width:200px;text-align:center;top:764.18px;font-size:14.67px;color:#383838;font-weight:normal;">column_1</div>
<div class="t" style="left:255.0px;top:484.7px;width:200px;text-align:center;font-size:14.67px;color:#383838;transform:rotate(-90deg);transform-origin:center center;">column_2</div>
<div class="r" style="left:1115px;top:204px;width:22px;height:22px;background:#f0f0f0;border:1px solid #8e8e8e;border-radius:4px;"></div>
<svg class="r" style="left:1118px;top:207px;" width="16" height="16" viewBox="0 0 16 16"><defs><linearGradient id="gpl" x1="0" y1="0" x2="0" y2="1"><stop offset="0" stop-color="#bfe0f7"/><stop offset="1" stop-color="#3f8fcf"/></linearGradient></defs><path d="M5.5 1 H10.5 V5.5 H15 V10.5 H10.5 V15 H5.5 V10.5 H1 V5.5 H5.5 Z" fill="url(#gpl)" stroke="#2f6ea8" stroke-width="0.9"/></svg>
<div class="r" style="left:1142px;top:204px;width:22px;height:22px;background:#f0f0f0;border:1px solid #8e8e8e;border-radius:4px;"></div>
<svg class="r" style="left:1145px;top:207px;" width="16" height="16" viewBox="0 0 16 16"><rect x="1" y="5.5" width="14" height="5" fill="url(#gpl)" stroke="#2f6ea8" stroke-width="0.9"/></svg>
<div class="r" style="left:1174px;top:204px;width:22px;height:22px;background:#f0f0f0;border:1px solid #8e8e8e;border-radius:4px;"></div>
<svg class="r" style="left:1177px;top:207px;" width="16" height="16" viewBox="0 0 16 16"><path d="M1 5.5 H7 V2 L12.5 8 L7 14 V10.5 H1 Z" fill="url(#gpl)" stroke="#2f6ea8" stroke-width="0.9"/><rect x="13" y="1.5" width="2" height="13" fill="#2f6ea8"/></svg>
<div class="r" style="left:997px;top:227px;width:200px;height:578px;background:#f0f0f0;border:1px solid #9a9a9a;"></div>
<div class="t" style="left:1010px;top:239.84px;font-size:12px;color:#000;font-weight:bold;">Plot</div>
<svg class="r" style="left:1010px;top:261px;" width="16" height="16" viewBox="0 0 16 16"><circle cx="8" cy="8" r="6.5" fill="#fff" stroke="#333" stroke-width="1.1"/><circle cx="8" cy="8" r="3" fill="#111"/></svg>
<div class="t" style="left:1028px;top:261.54px;font-size:12px;color:#000;font-weight:normal;">Data</div>
<svg class="r" style="left:1010px;top:281px;" width="16" height="16" viewBox="0 0 16 16"><circle cx="8" cy="8" r="6.5" fill="#f0f0f0" stroke="#c4c4c4" stroke-width="1"/></svg>
<div class="t" style="left:1028px;top:283.64px;font-size:12px;color:#a9a9a9;font-weight:normal;">Model predictions</div>
<div class="t" style="left:1008px;top:370.84px;font-size:12px;color:#000;font-weight:bold;">Predictors</div>
<div class="t" style="left:1008px;top:395.44px;font-size:12px;color:#000;font-weight:normal;">X</div>
<div class="t" style="left:1008px;top:423.64px;font-size:12px;color:#000;font-weight:normal;">Y</div>
<div class="r" style="left:1023px;top:391px;width:163px;height:22px;background:#fff;border:1px solid #8e8e8e;border-radius:0 4px 4px 0;"></div>
<div class="r" style="left:1162px;top:392px;width:1px;height:20px;background:#9a9a9a;"></div>
<div class="r" style="left:1163px;top:392px;width:22px;height:20px;background:#f7f7f7;border-radius:0 3px 3px 0;"></div>
<svg class="r" style="left:1170px;top:399px;" width="9" height="6" viewBox="0 0 9 6"><path d="M0 0 L9 0 L4.5 6 Z" fill="#555"/></svg>
<div class="t" style="left:1029px;top:396.64px;font-size:12px;color:#000;font-weight:normal;">column_1</div>
<div class="r" style="left:1023px;top:418px;width:163px;height:22px;background:#fff;border:1px solid #8e8e8e;border-radius:0 4px 4px 0;"></div>
<div class="r" style="left:1162px;top:419px;width:1px;height:20px;background:#9a9a9a;"></div>
<div class="r" style="left:1163px;top:419px;width:22px;height:20px;background:#f7f7f7;border-radius:0 3px 3px 0;"></div>
<svg class="r" style="left:1170px;top:426px;" width="9" height="6" viewBox="0 0 9 6"><path d="M0 0 L9 0 L4.5 6 Z" fill="#555"/></svg>
<div class="t" style="left:1029px;top:423.64px;font-size:12px;color:#000;font-weight:normal;">column_2</div>
<div class="t" style="left:1010px;top:468.24px;font-size:12px;color:#000;font-weight:bold;">Classes</div>
<div class="r" style="left:1099px;top:463px;width:85px;height:23px;background:#ececec;border:1px solid #c9c9c9;border-radius:4px;"></div>
<div class="t" style="left:1091.50px;width:100px;text-align:center;top:468.24px;font-size:12px;color:#a3a3a3;font-weight:normal;">Move to Front</div>
<div class="r" style="left:1010px;top:491px;width:174px;height:265px;background:#fff;border:1px solid #8a8a8a;"></div>
<div class="r" style="left:1011px;top:492px;width:172px;height:26px;background:#f3f3f3;"></div>
<div class="r" style="left:1011px;top:518px;width:172px;height:1px;background:#8a8a8a;"></div>
<div class="r" style="left:1061px;top:492px;width:1px;height:96px;background:#8a8a8a;"></div>
<div class="t" style="left:1014px;top:499.84px;font-size:12px;color:#000;font-weight:bold;">Show</div>
<div class="t" style="left:1065px;top:499.84px;font-size:12px;color:#000;font-weight:bold;">Order</div>
<div class="r" style="left:1011px;top:519px;width:50px;height:22px;background:#0072BD;"></div>
<div class="r" style="left:1062px;top:519px;width:121px;height:22px;background:#fff;"></div>
<div class="r" style="left:1011px;top:541px;width:172px;height:1px;background:#8a8a8a;"></div>
<div class="r" style="left:1029px;top:523px;width:14px;height:14px;background:#fff;border:1px solid #555;"></div>
<svg class="r" style="left:1031px;top:525px;" width="10" height="10" viewBox="0 0 10 10"><path d="M1 5 L4 8 L9 1.5" stroke="#111" stroke-width="1.6" fill="none"/></svg>
<div class="t" style="left:1066px;top:523.84px;font-size:12px;color:#000;font-weight:normal;">1</div>
<div class="r" style="left:1011px;top:542px;width:50px;height:22px;background:#D95319;"></div>
<div class="r" style="left:1062px;top:542px;width:121px;height:22px;background:#f0f0f0;"></div>
<div class="r" style="left:1011px;top:564px;width:172px;height:1px;background:#8a8a8a;"></div>
<div class="r" style="left:1029px;top:546px;width:14px;height:14px;background:#fff;border:1px solid #555;"></div>
<svg class="r" style="left:1031px;top:548px;" width="10" height="10" viewBox="0 0 10 10"><path d="M1 5 L4 8 L9 1.5" stroke="#111" stroke-width="1.6" fill="none"/></svg>
<div class="t" style="left:1066px;top:546.84px;font-size:12px;color:#000;font-weight:normal;">2</div>
<div class="r" style="left:1011px;top:565px;width:50px;height:23px;background:#EDB120;"></div>
<div class="r" style="left:1062px;top:565px;width:121px;height:23px;background:#fff;"></div>
<div class="r" style="left:1011px;top:588px;width:172px;height:1px;background:#8a8a8a;"></div>
<div class="r" style="left:1029px;top:569px;width:14px;height:14px;background:#fff;border:1px solid #555;"></div>
<svg class="r" style="left:1031px;top:571px;" width="10" height="10" viewBox="0 0 10 10"><path d="M1 5 L4 8 L9 1.5" stroke="#111" stroke-width="1.6" fill="none"/></svg>
<div class="t" style="left:1066px;top:569.84px;font-size:12px;color:#000;font-weight:normal;">3</div>
<div class="t" style="left:1008px;top:781.84px;font-size:12px;font-weight:bold;color:#1763c6;text-decoration:underline;">How to investigate features</div>
</body></html>
